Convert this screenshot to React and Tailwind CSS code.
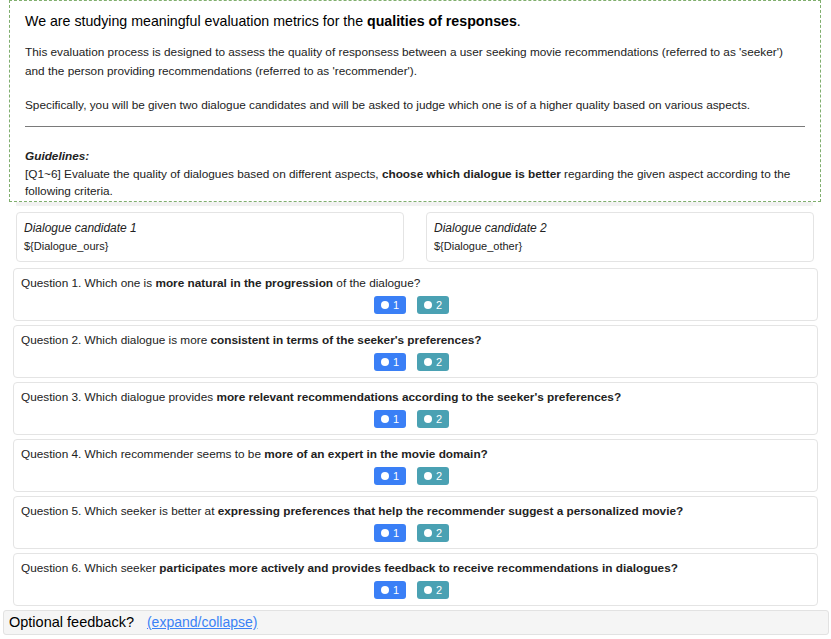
const questions = [
  ["Question 1. Which one is ", "more natural in the progression", " of the dialogue?"],
  ["Question 2. Which dialogue is more ", "consistent in terms of the seeker's preferences?", ""],
  ["Question 3. Which dialogue provides ", "more relevant recommendations according to the seeker's preferences?", ""],
  ["Question 4. Which recommender seems to be ", "more of an expert in the movie domain?", ""],
  ["Question 5. Which seeker is better at ", "expressing preferences that help the recommender suggest a personalized movie?", ""],
  ["Question 6. Which seeker ", "participates more actively and provides feedback to receive recommendations in dialogues?", ""],
];

function ChoiceButton({ label, tone }) {
  return (
    <span
      className={`flex h-[18px] items-center gap-[4px] rounded-[3px] px-[7px] text-[11px] text-white ${
        tone === "blue" ? "bg-[#3a7ff6]" : "bg-[#4aa1b3]"
      }`}
    >
      <span className="h-[8px] w-[8px] rounded-full bg-white" />
      {label}
    </span>
  );
}

function QuestionCard({ parts }) {
  return (
    <div className="mb-[4px] rounded-[4px] border border-[#e4e4e4] bg-white px-[7px] pb-[6px] pt-[6px]">
      <p className="text-[11.8px] leading-[16px] text-[#222]">
        {parts[0]}
        <b>{parts[1]}</b>
        {parts[2]}
      </p>
      <div className="mt-[5px] flex justify-center gap-[11px] pr-[8px]">
        <ChoiceButton label="1" tone="blue" />
        <ChoiceButton label="2" tone="teal" />
      </div>
    </div>
  );
}

export default function App() {
  return (
    <div className="w-[831px] bg-white text-[#222]" style={{ fontFamily: '"Liberation Sans", Arial, sans-serif' }}>
      <div className="ml-[9px] h-[202px] w-[812px] overflow-hidden border border-dashed border-[#7fae6d] px-[15px] pt-[10px]">
        <h1 className="text-[14.2px] leading-[20px] text-black">
          We are studying meaningful evaluation metrics for the <b>qualities of responses</b>.
        </h1>
        <p className="mt-[12px] text-[11.8px] leading-[19px]">
          This evaluation process is designed to assess the quality of responsess between a user seeking movie recommendations (referred to as 'seeker') and the person providing recommendations (referred to as 'recommender').
        </p>
        <p className="mt-[15px] text-[11.8px] leading-[19px]">
          Specifically, you will be given two dialogue candidates and will be asked to judge which one is of a higher quality based on various aspects.
        </p>
        <hr className="mt-[11px] border-t-[1.5px] border-[#7a7a7a]" />
        <div className="mt-[21px] text-[11.8px] leading-[17.5px]">
          <b><i>Guidelines:</i></b>
          <p>
            [Q1~6] Evaluate the quality of dialogues based on different aspects, <b>choose which dialogue is better</b> regarding the given aspect according to the following criteria.
          </p>
        </div>
      </div>
      <div className="ml-[16px] h-[4px] w-[797px] bg-[#f2f2f2]" />

      <div className="ml-[16px] mt-[6px] grid w-[798px] grid-cols-2 gap-[22px]">
        {[
          ["Dialogue candidate 1", "${Dialogue_ours}"],
          ["Dialogue candidate 2", "${Dialogue_other}"],
        ].map(([title, body]) => (
          <div key={title} className="rounded-[4px] border border-[#e4e4e4] px-[7px] py-[6px]">
            <p className="text-[12px] italic leading-[18px]">{title}</p>
            <p className="text-[11px] leading-[18px]">{body}</p>
          </div>
        ))}
      </div>

      <div className="ml-[13px] mt-[6px] w-[805px]">
        {questions.map((q, i) => (
          <QuestionCard key={i} parts={q} />
        ))}
      </div>

      <div className="ml-[3px] mt-[1px] flex h-[25px] w-[826px] items-center rounded-[3px] border border-[#e2e2e2] bg-[#f5f5f5] px-[5px]">
        <span className="text-[14.5px] text-black">Optional feedback?</span>
        <a href="#" className="ml-[13px] text-[14px] text-[#3b82f6] underline">
          (expand/collapse)
        </a>
      </div>
    </div>
  );
}
